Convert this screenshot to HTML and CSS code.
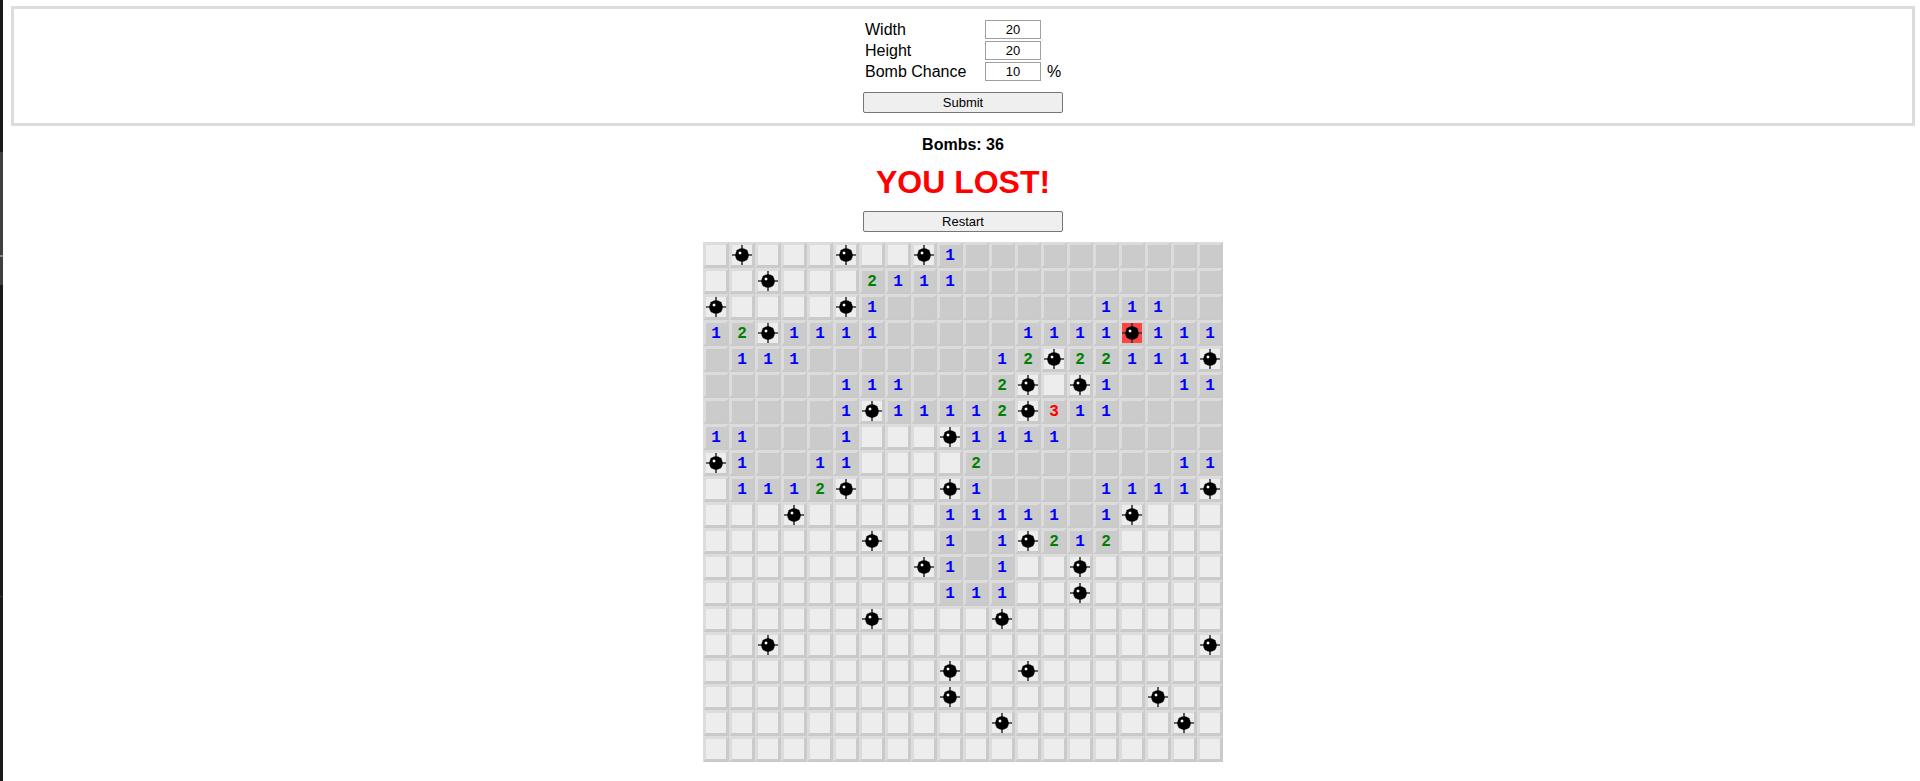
FILE: index.html
```html
<!DOCTYPE html>
<html lang="en">
<head>
<meta charset="utf-8">
<title>Minesweeper</title>
<link rel="stylesheet" href="styles.css">
</head>
<body>
<div class="edge"></div>
<main class="page">
  <form class="settings">
    <div class="fields">
      <label for="width">Width</label><input class="number" id="width" type="text" value="20"><span></span>
      <label for="height">Height</label><input class="number" id="height" type="text" value="20"><span></span>
      <label for="chance">Bomb Chance</label><input class="number" id="chance" type="text" value="10"><span>%</span>
    </div>
    <button class="action" type="button">Submit</button>
  </form>
  <p class="count">Bombs: 36</p>
  <h1 class="result">YOU LOST!</h1>
  <button class="action" type="button">Restart</button>
  <div class="board" id="board"></div>
</main>
<svg class="symbols" aria-hidden="true">
  <symbol id="bomb" viewBox="0 0 20 20">
    <path d="M10 0V20M0 10H20" stroke="#333" stroke-width="1.6"/>
    <path d="M5 5L15 15M15 5L5 15" stroke="#111" stroke-width="1.6"/>
    <circle cx="10" cy="10" r="6.8" fill="#000"/>
    <rect x="7" y="7" width="2" height="2" fill="#fff"/>
    <path d="M6 7H7V9H6ZM7 6H9V7H7ZM9 7H10V9H9ZM7 9H9V10H7Z" fill="#444"/>
  </symbol>
</svg>
<script src="board.js"></script>
</body>
</html>
```
FILE: styles.css
```css
* {
  box-sizing: border-box;
}

body {
  display: flex;
  min-height: 100vh;
  margin: 0;
  background: #fff;
  color: #000;
  font: 16px/18px "Liberation Sans", Arial, sans-serif;
}

.edge {
  flex: none;
  width: 3px;
  background: linear-gradient(#1a1a1a 152px, #404040 152px 255px, #888 255px 257px, #404040 257px 285px, #1a1a1a 285px 596px, #383838 596px 597px, #1a1a1a 597px);
}

.page {
  flex: 1;
  display: flex;
  flex-direction: column;
  align-items: center;
  padding: 6px 5px 16px 8px;
}

.settings {
  align-self: stretch;
  display: flex;
  flex-direction: column;
  align-items: center;
  gap: 11px;
  padding: 11px 10px 10px;
  border: 3px solid #dcdcdc;
}

.fields {
  display: grid;
  grid-template-columns: 120px 56px 20px;
  align-items: center;
  row-gap: 2px;
  width: 196px;
}

.fields span {
  margin-left: 6px;
}

.number {
  width: 56px;
  height: 19px;
  padding: 1px 2px;
  border: 1px solid #a0a0a0;
  background: #fff;
  color: #000;
  font: 13px/15px "Liberation Sans", Arial, sans-serif;
  text-align: center;
}

.action {
  width: 200px;
  height: 21px;
  padding: 0 6px;
  border: 1px solid #767676;
  border-radius: 2px;
  background: #efefef;
  color: #000;
  font: 13px/17px "Liberation Sans", Arial, sans-serif;
}

.count {
  margin: 10px 0;
  font-weight: bold;
}

.result {
  margin: 0 0 10px;
  color: #f00;
  font-size: 32px;
  line-height: 37px;
}

.board {
  display: grid;
  grid-template-columns: repeat(20, 26px);
  margin-top: 10px;
}

.cell {
  display: grid;
  place-items: center;
  width: 26px;
  height: 26px;
  padding: 0;
  border: 3px solid;
  border-color: #dcdcdc #cacaca #cacaca #dcdcdc;
  border-radius: 0;
  background: #ededed;
  font: bold 16px/18px "Liberation Mono", "Courier New", monospace;
}

.open {
  padding-top: 2px;
  background: #cbcbcb;
}

.exploded {
  background: #ff4444;
}

.n1 {
  color: #00f;
}

.n2 {
  color: #008000;
}

.n3 {
  color: #f00;
}

.bomb {
  display: block;
  width: 20px;
  height: 20px;
}

.symbols {
  display: none;
}
```
FILE: board.js
```js
// # closed, . open, * bomb, X exploded bomb, digits are neighbour counts
const rows = [
  "#*###*##*1..........",
  "##*###2111..........",
  "*####*1........111..",
  "12*1111.....1111X111",
  ".111.......12*22111*",
  ".....111...2*#*1..11",
  ".....1*11112*311....",
  "11...1###*1111......",
  "*1..11####2.......11",
  "#1112*###*1....1111*",
  "###*#####11111.1*###",
  "######*##1.1*212####",
  "########*1.1##*#####",
  "#########111##*#####",
  "######*####*########",
  "##*################*",
  "#########*##*#######",
  "#########*#######*##",
  "###########*######*#",
  "####################"
];
const board = document.getElementById("board");
for (const row of rows) {
  for (const mark of row) {
    const cell = document.createElement("button");
    cell.type = "button";
    cell.className = "cell";
    if (mark === "*" || mark === "X") {
      cell.innerHTML = '<svg class="bomb" aria-label="Bomb"><use href="#bomb"/></svg>';
      if (mark === "X") cell.classList.add("exploded");
    } else if (mark !== "#") {
      cell.classList.add("open");
      if (mark !== ".") {
        cell.classList.add("n" + mark);
        cell.textContent = mark;
      }
    }
    board.append(cell);
  }
}
```
